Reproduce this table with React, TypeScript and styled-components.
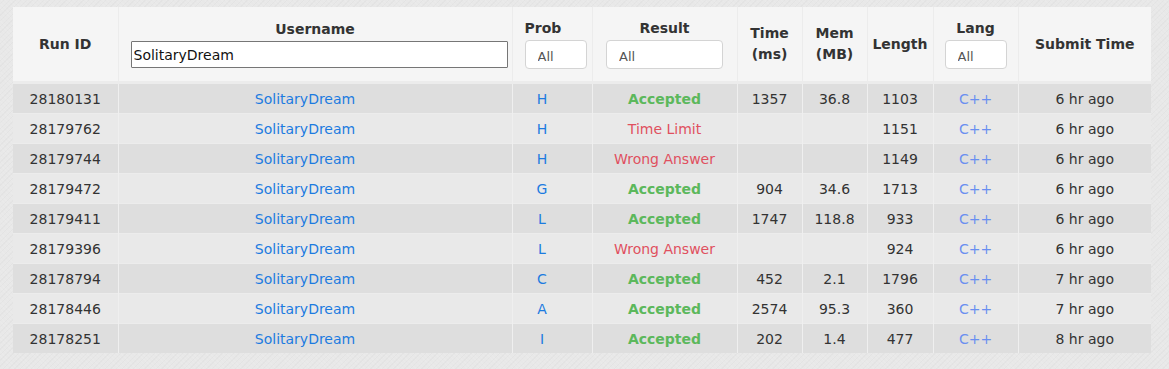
import React from "react";
import styled, { createGlobalStyle } from "styled-components";

const Global = createGlobalStyle`
  html, body { margin: 0; padding: 0; }
  body {
    background-color: #e8e8e8;
    background-image:
      repeating-linear-gradient(45deg, rgba(255,255,255,0.08) 0 1px, transparent 1px 3px),
      repeating-linear-gradient(-45deg, rgba(0,0,0,0.025) 0 1px, transparent 1px 4px);
    font-family: "DejaVu Sans", Verdana, sans-serif;
    color: #333;
  }
`;

const Page = styled.div`
  padding: 7px 18px 16px 13px;
`;

const Table = styled.table`
  width: 1138px;
  table-layout: fixed;
  border-collapse: collapse;
  font-size: 14px;
`;

const Head = styled.thead`
  border-bottom: 3px solid #ececec;
`;

const Th = styled.th<{ $left?: boolean }>`
  height: 74px;
  padding: ${(p) => (p.$left ? "0 0 0 12px" : "0")};
  background: #f5f5f5;
  border-left: 1px solid #ececec;
  border-right: 1px solid #ececec;
  font-weight: bold;
  color: #333;
  text-align: ${(p) => (p.$left ? "left" : "center")};
  vertical-align: middle;
  line-height: 21px;
  &:first-child { border-left: none; }
  &:last-child { border-right: none; }
`;

const Label = styled.div`
  line-height: 18px;
  margin-bottom: 3px;
`;

const NameInput = styled.input`
  box-sizing: border-box;
  display: block;
  margin: 0 0 0 12px;
  width: 377px;
  height: 27px;
  border: 1px solid #767676;
  border-radius: 1px;
  background: #fff;
  font-family: "DejaVu Sans", Verdana, sans-serif;
  font-size: 14px;
  color: #111;
  padding: 0 2px;
  outline: none;
`;

const Select = styled.select<{ $w: number; $left?: boolean }>`
  box-sizing: border-box;
  appearance: none;
  -webkit-appearance: none;
  display: block;
  margin: ${(p) => (p.$left ? "0" : "0 auto")};
  width: ${(p) => p.$w}px;
  height: 29px;
  border: 1px solid #d4d4d4;
  border-radius: 4px;
  background: #fff;
  font-family: "DejaVu Sans", Verdana, sans-serif;
  font-size: 13px;
  color: #555;
  padding: 3px 0 0 12px;
  outline: none;
`;

const Row = styled.tr<{ $odd: boolean }>`
  background: ${(p) => (p.$odd ? "#dedede" : "#e9e9e9")};
  border-top: 1px solid #ececec;
  &:first-child { border-top: none; }
`;

const Td = styled.td<{ $shift?: number }>`
  height: 29px;
  padding: 0 ${(p) => p.$shift ?? 0}px 0 0;
  text-align: center;
  vertical-align: middle;
  border-left: 1px solid #efefef;
  border-right: 1px solid #efefef;
  color: #333;
  &:first-child { border-left: none; }
  &:last-child { border-right: none; }
`;

const Link = styled.span<{ $tone?: "lang" }>`
  color: ${(p) => (p.$tone === "lang" ? "#6a8ff0" : "#1c7be0")};
`;

const Verdict = styled.span<{ $ok: boolean }>`
  color: ${(p) => (p.$ok ? "#5cb85c" : "#e0505e")};
  font-weight: ${(p) => (p.$ok ? "bold" : "normal")};
`;

type R = {
  id: string;
  prob: string;
  result: string;
  time: string;
  mem: string;
  len: string;
  ago: string;
};

const rows: R[] = [
  { id: "28180131", prob: "H", result: "Accepted", time: "1357", mem: "36.8", len: "1103", ago: "6 hr ago" },
  { id: "28179762", prob: "H", result: "Time Limit", time: "", mem: "", len: "1151", ago: "6 hr ago" },
  { id: "28179744", prob: "H", result: "Wrong Answer", time: "", mem: "", len: "1149", ago: "6 hr ago" },
  { id: "28179472", prob: "G", result: "Accepted", time: "904", mem: "34.6", len: "1713", ago: "6 hr ago" },
  { id: "28179411", prob: "L", result: "Accepted", time: "1747", mem: "118.8", len: "933", ago: "6 hr ago" },
  { id: "28179396", prob: "L", result: "Wrong Answer", time: "", mem: "", len: "924", ago: "6 hr ago" },
  { id: "28178794", prob: "C", result: "Accepted", time: "452", mem: "2.1", len: "1796", ago: "7 hr ago" },
  { id: "28178446", prob: "A", result: "Accepted", time: "2574", mem: "95.3", len: "360", ago: "7 hr ago" },
  { id: "28178251", prob: "I", result: "Accepted", time: "202", mem: "1.4", len: "477", ago: "8 hr ago" },
];

const widths = [105, 394, 80, 145, 65, 65, 66, 85, 133];

export default function App() {
  return (
    <>
      <Global />
      <Page>
        <Table>
          <colgroup>
            {widths.map((w, i) => (
              <col key={i} style={{ width: w }} />
            ))}
          </colgroup>
          <Head>
            <tr>
              <Th>Run ID</Th>
              <Th>
                <Label>Username</Label>
                <NameInput defaultValue="SolitaryDream" />
              </Th>
              <Th $left>
                <Label>Prob</Label>
                <Select $w={62} $left><option>All</option></Select>
              </Th>
              <Th>
                <Label>Result</Label>
                <Select $w={117}><option>All</option></Select>
              </Th>
              <Th>Time<br />(ms)</Th>
              <Th>Mem<br />(MB)</Th>
              <Th>Length</Th>
              <Th>
                <Label>Lang</Label>
                <Select $w={62}><option>All</option></Select>
              </Th>
              <Th>Submit Time</Th>
            </tr>
          </Head>
          <tbody>
            {rows.map((r, i) => (
              <Row key={r.id} $odd={i % 2 === 0}>
                <Td>{r.id}</Td>
                <Td $shift={20}><Link>SolitaryDream</Link></Td>
                <Td $shift={20}><Link>{r.prob}</Link></Td>
                <Td><Verdict $ok={r.result === "Accepted"}>{r.result}</Verdict></Td>
                <Td>{r.time}</Td>
                <Td>{r.mem}</Td>
                <Td>{r.len}</Td>
                <Td><Link $tone="lang">C++</Link></Td>
                <Td>{r.ago}</Td>
              </Row>
            ))}
          </tbody>
        </Table>
      </Page>
    </>
  );
}
